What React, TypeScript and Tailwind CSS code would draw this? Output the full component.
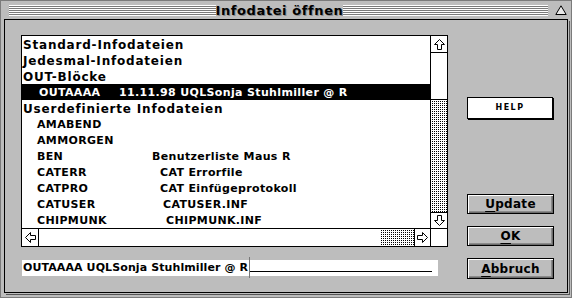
import React from "react";

const Arrow = ({ dir }: { dir: "up" | "down" | "left" | "right" }) => {
  const rot = dir === "up" ? 0 : dir === "down" ? 180 : dir === "left" ? 270 : 90;
  return (
    <svg width="15" height="15" viewBox="0 0 15 15" style={{ transform: `rotate(${rot}deg)` }}>
      <path d="M7.5 2.5 L12.5 7.5 H9.5 V12.5 H5.5 V7.5 H2.5 Z" fill="white" stroke="black" strokeWidth="1" />
    </svg>
  );
};

const Stripes = ({ className }: { className: string }) => (
  <div className={`flex flex-col ${className}`}>
    {[0, 1, 2, 3, 4].map((i) => (
      <div key={i} className="flex flex-col">
        <div className="h-px bg-white" />
        <div className="h-px bg-[#7a7a7a]" />
      </div>
    ))}
    <div className="h-px bg-white" />
  </div>
);

type Row =
  | { kind: "header"; text: string }
  | { kind: "item"; name: string; desc?: string; w?: string; selected?: boolean };

const rows: Row[] = [
  { kind: "header", text: "Standard-Infodateien" },
  { kind: "header", text: "Jedesmal-Infodateien" },
  { kind: "header", text: "OUT-Blöcke" },
  { kind: "item", name: "OUTAAAA", desc: "11.11.98 UQLSonja Stuhlmiller @ R", w: "w-[80px]", selected: true },
  { kind: "header", text: "Userdefinierte Infodateien" },
  { kind: "item", name: "AMABEND" },
  { kind: "item", name: "AMMORGEN" },
  { kind: "item", name: "BEN", desc: "Benutzerliste Maus R", w: "w-[115px]" },
  { kind: "item", name: "CATERR", desc: "CAT Errorfile", w: "w-[123px]" },
  { kind: "item", name: "CATPRO", desc: "CAT Einfügeprotokoll", w: "w-[123px]" },
  { kind: "item", name: "CATUSER", desc: "CATUSER.INF", w: "w-[126px]" },
  { kind: "item", name: "CHIPMUNK", desc: "CHIPMUNK.INF", w: "w-[129px]" },
];

const stipple =
  "bg-[conic-gradient(from_90deg_at_1px_1px,#000_90deg,#fff_0)] bg-[length:2px_2px]";

const GrayButton = ({ first, rest, className }: { first: string; rest: string; className: string }) => (
  <div
    className={`w-[87px] flex items-center justify-center border border-black bg-[#bdbdbd] shadow-[inset_1px_1px_0_#fff,inset_-1px_-1px_0_#6b6b6b,inset_-2px_-2px_0_#8a8a8a] text-[12px] leading-none tracking-[0.3px] ${className}`}
  >
    <span className="underline underline-offset-[3px] decoration-1">{first}</span>
    <span>{rest}</span>
  </div>
);

export default function App() {
  return (
    <div className="w-[572px] h-[298px] bg-[#bdbdbd] border border-[#7b7b7b] flex flex-col font-['DejaVu_Sans',sans-serif] font-bold text-black overflow-hidden">
      {/* title bar */}
      <div className="h-[18px] flex items-center shrink-0">
        <Stripes className="ml-[8px] w-[207px]" />
        <div className="w-[127px] flex justify-center whitespace-nowrap text-[13px] leading-none tracking-[0.6px] [text-shadow:1px_1px_0_#8a8a8a]">
          Infodatei öffnen
        </div>
        <Stripes className="w-[205px]" />
        <svg width="12" height="10" viewBox="0 0 12 10" className="ml-[7px]">
          <path d="M6 0.8 L11.2 9.5 H0.8 Z" fill="#e8e8e8" stroke="black" strokeWidth="1" />
        </svg>
      </div>
      {/* panel */}
      <div className="mx-[3px] mb-[4px] flex-1 border border-black shadow-[1px_1px_0_#bdbdbd,2px_2px_0_#555] flex">
        {/* left column */}
        <div className="pl-[16px] pt-[15px] flex flex-col">
          <div className="w-[427px] h-[212px] border border-black bg-white flex flex-col">
            <div className="flex h-[192px]">
              <div className="flex-1 flex flex-col">
                {rows.map((r, i) =>
                  r.kind === "header" ? (
                    <div key={i} className="h-[16px] pl-[1px] pt-[1px] text-[12px] leading-[16px] tracking-[0.8px] whitespace-nowrap">
                      {r.text}
                    </div>
                  ) : (
                    <div
                      key={i}
                      className={`h-[16px] flex pt-[1px] text-[11px] leading-[16px] tracking-[0.35px] whitespace-nowrap ${
                        r.selected ? "bg-black text-white pl-[17px]" : "pl-[15px]"
                      }`}
                    >
                      <span className={`inline-block ${r.w ?? ""}`}>{r.name}</span>
                      {r.desc && <span>{r.desc}</span>}
                    </div>
                  )
                )}
              </div>
              {/* vertical scrollbar */}
              <div className="w-[17px] border-l border-black flex flex-col">
                <div className="h-[17px] border-b border-black flex items-center justify-center">
                  <Arrow dir="up" />
                </div>
                <div className="h-[47px] border-b border-black" />
                <div className={`flex-1 ${stipple}`} />
                <div className="h-[16px] border-t border-black flex items-center justify-center">
                  <Arrow dir="down" />
                </div>
              </div>
            </div>
            {/* horizontal scrollbar */}
            <div className="flex h-[18px] border-t border-black">
              <div className="w-[17px] border-r border-black flex items-center justify-center">
                <Arrow dir="left" />
              </div>
              <div className="w-[341px]" />
              <div className={`w-[34px] ${stipple}`} />
              <div className="w-[17px] border-l border-r border-black flex items-center justify-center">
                <Arrow dir="right" />
              </div>
              <div className="flex-1" />
            </div>
          </div>
          {/* input */}
          <div className="mt-[13px] ml-[1px] w-[416px] h-[16px] bg-white flex items-start pl-[1px] text-[11px] leading-[16px] tracking-[0.1px] whitespace-nowrap">
            <span>OUTAAAA UQLSonja Stuhlmiller @ R</span>
            <div className="relative w-px h-[16px] ml-[1px]">
              <div className="absolute left-0 top-[-3px] w-px h-[21px] bg-[#777]" />
            </div>
            <div className="flex-1 mr-[6px] h-[12px] border-b border-black" />
          </div>
        </div>
        {/* right column */}
        <div className="ml-[19px] flex flex-col">
          <div className="mt-[77px] w-[86px] h-[22px] bg-white border border-black shadow-[1px_1px_0_#000] flex items-center justify-center text-[8px] leading-none tracking-[1.5px]">
            HELP
          </div>
          <GrayButton first="U" rest="pdate" className="mt-[75px] h-[20px]" />
          <GrayButton first="O" rest="K" className="mt-[12px] h-[20px]" />
          <GrayButton first="A" rest="bbruch" className="mt-[12px] h-[21px]" />
        </div>
      </div>
    </div>
  );
}
